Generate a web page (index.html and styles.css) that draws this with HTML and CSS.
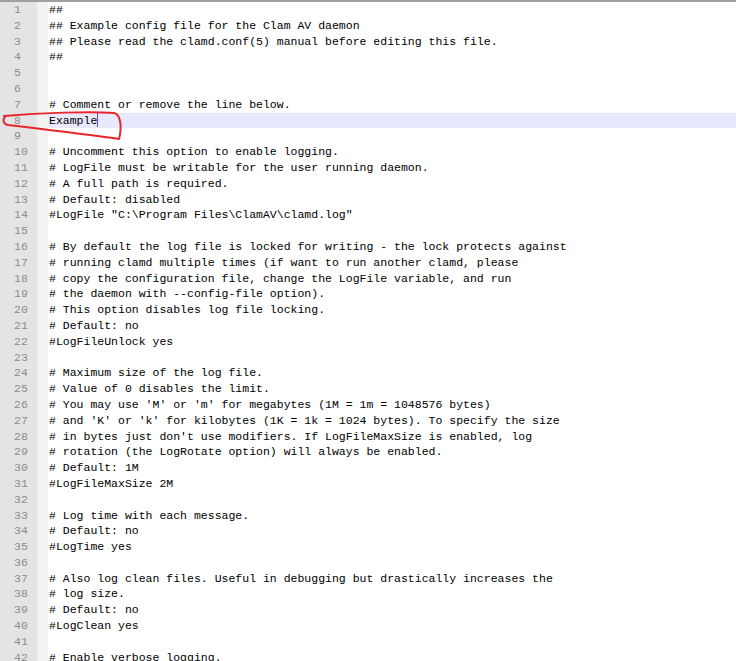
FILE: index.html
```html
<!DOCTYPE html>
<html lang="en">
<head>
  <meta charset="UTF-8">
  <meta name="viewport" content="width=device-width, initial-scale=1.0">
  <title>clamd.conf</title>
  <link rel="stylesheet" href="styles.css">
</head>
<body>
  <div class="editor">
    <div class="line"><span class="num">1</span><span class="fold"></span><span class="code">##</span></div>
    <div class="line"><span class="num">2</span><span class="fold"></span><span class="code">## Example config file for the Clam AV daemon</span></div>
    <div class="line"><span class="num">3</span><span class="fold"></span><span class="code">## Please read the clamd.conf(5) manual before editing this file.</span></div>
    <div class="line"><span class="num">4</span><span class="fold"></span><span class="code">##</span></div>
    <div class="line"><span class="num">5</span><span class="fold"></span><span class="code"></span></div>
    <div class="line"><span class="num">6</span><span class="fold"></span><span class="code"></span></div>
    <div class="line"><span class="num">7</span><span class="fold"></span><span class="code"># Comment or remove the line below.</span></div>
    <div class="line current"><span class="num">8</span><span class="fold"></span><span class="code">Example<span class="caret"></span></span></div>
    <div class="line"><span class="num">9</span><span class="fold"></span><span class="code"></span></div>
    <div class="line"><span class="num">10</span><span class="fold"></span><span class="code"># Uncomment this option to enable logging.</span></div>
    <div class="line"><span class="num">11</span><span class="fold"></span><span class="code"># LogFile must be writable for the user running daemon.</span></div>
    <div class="line"><span class="num">12</span><span class="fold"></span><span class="code"># A full path is required.</span></div>
    <div class="line"><span class="num">13</span><span class="fold"></span><span class="code"># Default: disabled</span></div>
    <div class="line"><span class="num">14</span><span class="fold"></span><span class="code">#LogFile "C:\Program Files\ClamAV\clamd.log"</span></div>
    <div class="line"><span class="num">15</span><span class="fold"></span><span class="code"></span></div>
    <div class="line"><span class="num">16</span><span class="fold"></span><span class="code"># By default the log file is locked for writing - the lock protects against</span></div>
    <div class="line"><span class="num">17</span><span class="fold"></span><span class="code"># running clamd multiple times (if want to run another clamd, please</span></div>
    <div class="line"><span class="num">18</span><span class="fold"></span><span class="code"># copy the configuration file, change the LogFile variable, and run</span></div>
    <div class="line"><span class="num">19</span><span class="fold"></span><span class="code"># the daemon with --config-file option).</span></div>
    <div class="line"><span class="num">20</span><span class="fold"></span><span class="code"># This option disables log file locking.</span></div>
    <div class="line"><span class="num">21</span><span class="fold"></span><span class="code"># Default: no</span></div>
    <div class="line"><span class="num">22</span><span class="fold"></span><span class="code">#LogFileUnlock yes</span></div>
    <div class="line"><span class="num">23</span><span class="fold"></span><span class="code"></span></div>
    <div class="line"><span class="num">24</span><span class="fold"></span><span class="code"># Maximum size of the log file.</span></div>
    <div class="line"><span class="num">25</span><span class="fold"></span><span class="code"># Value of 0 disables the limit.</span></div>
    <div class="line"><span class="num">26</span><span class="fold"></span><span class="code"># You may use 'M' or 'm' for megabytes (1M = 1m = 1048576 bytes)</span></div>
    <div class="line"><span class="num">27</span><span class="fold"></span><span class="code"># and 'K' or 'k' for kilobytes (1K = 1k = 1024 bytes). To specify the size</span></div>
    <div class="line"><span class="num">28</span><span class="fold"></span><span class="code"># in bytes just don't use modifiers. If LogFileMaxSize is enabled, log</span></div>
    <div class="line"><span class="num">29</span><span class="fold"></span><span class="code"># rotation (the LogRotate option) will always be enabled.</span></div>
    <div class="line"><span class="num">30</span><span class="fold"></span><span class="code"># Default: 1M</span></div>
    <div class="line"><span class="num">31</span><span class="fold"></span><span class="code">#LogFileMaxSize 2M</span></div>
    <div class="line"><span class="num">32</span><span class="fold"></span><span class="code"></span></div>
    <div class="line"><span class="num">33</span><span class="fold"></span><span class="code"># Log time with each message.</span></div>
    <div class="line"><span class="num">34</span><span class="fold"></span><span class="code"># Default: no</span></div>
    <div class="line"><span class="num">35</span><span class="fold"></span><span class="code">#LogTime yes</span></div>
    <div class="line"><span class="num">36</span><span class="fold"></span><span class="code"></span></div>
    <div class="line"><span class="num">37</span><span class="fold"></span><span class="code"># Also log clean files. Useful in debugging but drastically increases the</span></div>
    <div class="line"><span class="num">38</span><span class="fold"></span><span class="code"># log size.</span></div>
    <div class="line"><span class="num">39</span><span class="fold"></span><span class="code"># Default: no</span></div>
    <div class="line"><span class="num">40</span><span class="fold"></span><span class="code">#LogClean yes</span></div>
    <div class="line"><span class="num">41</span><span class="fold"></span><span class="code"></span></div>
    <div class="line"><span class="num">42</span><span class="fold"></span><span class="code"># Enable verbose logging.</span></div>

    <!-- hand drawn mark around line 8 -->
    <svg class="mark" width="140" height="50" viewBox="0 0 140 50">
      <path d="M 4 10 C 40 7, 90 5, 114 7 C 121 8, 122 22, 119 33 C 100 30, 50 24, 8 19 C 3 18, 2 13, 6 10" fill="none" stroke="#e8262a" stroke-width="2" stroke-linecap="round" stroke-linejoin="round"/>
    </svg>
  </div>
</body>
</html>
```

FILE: styles.css
```css
body {
  margin: 0;
  padding: 0;
  background: #fff;
  overflow: hidden;
}

.editor {
  position: relative;
  border-top: 2px solid #a0a0a0;
  font-family: "Liberation Mono", "Courier New", monospace;
  font-size: 11.5px;
  line-height: 15.8px;
  color: #000;
}

.line {
  display: flex;
  height: 15.8px;
}

.num {
  width: 37px;
  flex: none;
  box-sizing: border-box;
  padding-left: 14px;
  background: #e4e4e4;
  color: #8c8c8c;
}

.fold {
  width: 11px;
  flex: none;
  background: #f2f2f2;
}

.code {
  flex: 1;
  padding-left: 1px;
  white-space: pre;
}

.current .code {
  background: #e8e8ff;
}

.caret {
  display: inline-block;
  width: 1px;
  height: 14px;
  vertical-align: -3px;
  background: #7a3cf0;
}

.mark {
  position: absolute;
  left: 0;
  top: 104px;
}
```
